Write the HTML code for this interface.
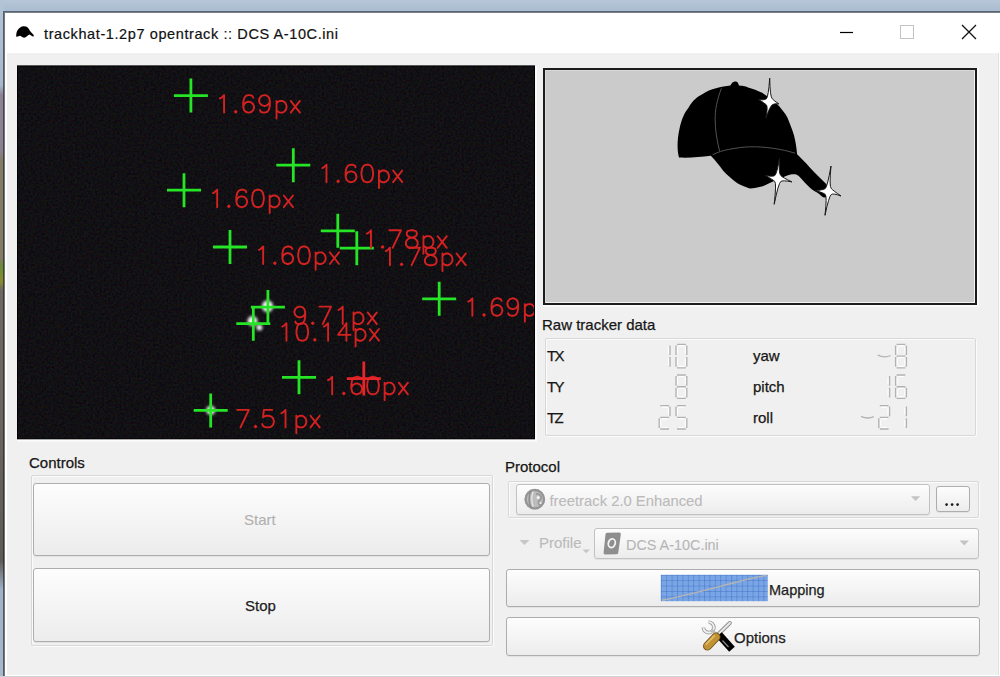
<!DOCTYPE html>
<html><head><meta charset="utf-8"><style>
*{margin:0;padding:0;box-sizing:border-box}
html,body{width:1000px;height:677px;overflow:hidden;background:#ffffff;font-family:"Liberation Sans",sans-serif;color:#000}
.a{position:absolute}
#bgtop{left:0;top:0;width:1000px;height:12px;background:linear-gradient(#b7c6d8,#a9bbcf)}
#bgleft{left:0;top:0;width:4px;height:677px;background:linear-gradient(#b4c4d7 0,#a8b8cc 85px,#8c8494 95px,#8a8290 150px,#857a66 160px,#857a66 258px,#6a8a3a 266px,#8a8a30 282px,#6d6862 290px,#6a6560 420px,#5e5a56 560px,#9fb2c6 590px,#a6b8cb 677px)}
#win{left:3px;top:11px;width:997px;height:666px;border-left:2px solid rgba(25,28,34,0.6);border-top:2px solid rgba(40,50,62,0.62);background:#fff;background-clip:padding-box}
#body{left:7px;top:53px;width:991px;height:622px;background:#f0f0f0}
#rline{left:998px;top:53px;width:1px;height:622px;background:#e2e2e2}
#bline{left:0;top:676px;width:1000px;height:1px;background:#cfd3d8}
#title{left:5px;top:13px;width:995px;height:40px;background:#fff}
.lbl{font-size:15px;white-space:nowrap;line-height:1;color:#161616;-webkit-text-stroke:0.25px currentColor}
#prev{left:543px;top:68px;width:434px;height:237px;background:#cbcbcb;border:2px solid #1c1c1c;box-shadow:inset 1px 1px 0 #d8d8d8,inset -1px -1px 0 #f2f2f2}
.gb{border:1px solid #d8d8d8;border-radius:2px;box-shadow:inset 1px 1px 0 #fbfbfb,1px 1px 0 #fbfbfb}
.btn{border:1px solid #adadad;border-radius:3px;background:linear-gradient(#fdfdfd,#ececec);box-shadow:0 1px 0 #e2e2e2}
</style></head><body>
<div class="a" id="bgtop"></div><div class="a" id="bgleft"></div><div class="a" id="win"></div><div class="a" id="title"></div><div class="a" id="body"></div><div class="a" id="rline"></div><div class="a" id="bline"></div>
<svg class="a" style="left:0;top:0" width="1000" height="60" viewBox="0 0 1000 60"><path d="M16.3,36.8 C15.8,32 18.3,27.3 23,26.3 C26.5,25.8 29,28 30,31 L33.9,35.3 L33.2,36.7 L29.5,34.6 C27.5,35 26.5,37.6 24,37.7 C22,37.6 21,35.6 19.5,35.9 C18,36.1 17,37 16.3,36.8Z" fill="#000"/><path d="M840,32.5H853" stroke="#000" stroke-width="1.2"/><rect x="900.5" y="25.5" width="13" height="13" fill="none" stroke="#c4c4c4" stroke-width="1"/><path d="M962,25L976,39M976,25L962,39" stroke="#111" stroke-width="1.3"/></svg>
<div class="a lbl" style="left:44px;top:27px;font-size:14.5px;letter-spacing:0.6px;color:#111;-webkit-text-stroke:0.2px #111">trackhat-1.2p7 opentrack :: DCS A-10C.ini</div>
<svg class="a" style="left:0;top:0" width="1000" height="677" viewBox="0 0 1000 677"><defs><clipPath id="cc"><rect x="17" y="65.5" width="518" height="374"/></clipPath><filter id="bl" x="-1" y="-1" width="3" height="3"><feGaussianBlur stdDeviation="1.6"/></filter><filter id="nz" x="0" y="0" width="1" height="1"><feTurbulence type="fractalNoise" baseFrequency="0.45" numOctaves="2" seed="7"/><feColorMatrix type="matrix" values="1.6 0 0 0 -0.62  0 1.6 0 0 -0.64  0 0 1.6 0 -0.62  0 0 0 0 0.07"/></filter></defs><g clip-path="url(#cc)"><rect x="17" y="65.5" width="518" height="374" fill="#0b0a0d"/><rect x="17" y="65.5" width="518" height="374" filter="url(#nz)"/><g fill="#f4f4f4" filter="url(#bl)"><ellipse cx="267.5" cy="306.3" rx="5.5" ry="6"/><ellipse cx="252.5" cy="321" rx="5" ry="5"/><circle cx="259.4" cy="327.4" r="3"/><circle cx="210.7" cy="410.2" r="4.5"/></g><path d="M173.9,95.6H207.9M190.9,78.6V112.6" stroke="#26e426" stroke-width="2.8" fill="none"/><path d="M276.3,165.2H310.3M293.3,148.2V182.2" stroke="#26e426" stroke-width="2.8" fill="none"/><path d="M167.0,190.2H201.0M184.0,173.2V207.2" stroke="#26e426" stroke-width="2.8" fill="none"/><path d="M213.0,247.0H247.0M230.0,230.0V264.0" stroke="#26e426" stroke-width="2.8" fill="none"/><path d="M320.8,230.8H354.8M337.8,213.8V247.8" stroke="#26e426" stroke-width="2.8" fill="none"/><path d="M339.8,248.2H373.8M356.8,231.2V265.2" stroke="#26e426" stroke-width="2.8" fill="none"/><path d="M250.89999999999998,307.1H284.9M267.9,290.1V324.1" stroke="#26e426" stroke-width="2.8" fill="none"/><path d="M236.3,323.7H270.3M253.3,306.7V340.7" stroke="#26e426" stroke-width="2.8" fill="none"/><path d="M422.2,298.8H456.2M439.2,281.8V315.8" stroke="#26e426" stroke-width="2.8" fill="none"/><path d="M282.0,377.3H316.0M299.0,360.3V394.3" stroke="#26e426" stroke-width="2.8" fill="none"/><path d="M193.7,410.4H227.7M210.7,393.4V427.4" stroke="#26e426" stroke-width="2.8" fill="none"/><g fill="none" stroke="#d42222" stroke-width="2.28" stroke-linecap="round" stroke-linejoin="round"><path transform="translate(223.23,105.10) scale(0.833)" d="M-4,-8L-2,-9L1,-12L1,9"/><path transform="translate(235.72,105.10) scale(0.833)" d="M0,7L-1,8L0,9L1,8Z"/><path transform="translate(248.22,105.10) scale(0.833)" d="M6,-9L5,-11L2,-12L0,-12L-3,-11L-5,-8L-6,-3L-6,2L-5,6L-3,8L0,9L1,9L4,8L6,6L7,3L7,2L6,-1L4,-3L1,-4L0,-4L-3,-3L-5,-1L-6,2"/><path transform="translate(264.88,105.10) scale(0.833)" d="M6,-5L5,-2L3,0L0,1L-1,1L-4,0L-6,-2L-7,-5L-7,-6L-6,-9L-4,-11L-1,-12L0,-12L3,-11L5,-9L6,-5L6,0L5,5L3,8L0,9L-2,9L-5,8L-6,6"/><path transform="translate(281.54,105.10) scale(0.833)" d="M-6,-5L-6,16M-6,-2L-4,-4L-2,-5L1,-5L3,-4L5,-2L6,1L6,3L5,6L3,8L1,9L-2,9L-4,8L-6,6"/><path transform="translate(295.70,105.10) scale(0.833)" d="M-6,-5L5,9M5,-5L-6,9"/></g><g fill="none" stroke="#d42222" stroke-width="2.28" stroke-linecap="round" stroke-linejoin="round"><path transform="translate(325.63,174.70) scale(0.833)" d="M-4,-8L-2,-9L1,-12L1,9"/><path transform="translate(338.12,174.70) scale(0.833)" d="M0,7L-1,8L0,9L1,8Z"/><path transform="translate(350.62,174.70) scale(0.833)" d="M6,-9L5,-11L2,-12L0,-12L-3,-11L-5,-8L-6,-3L-6,2L-5,6L-3,8L0,9L1,9L4,8L6,6L7,3L7,2L6,-1L4,-3L1,-4L0,-4L-3,-3L-5,-1L-6,2"/><path transform="translate(367.28,174.70) scale(0.833)" d="M-1,-12L-4,-11L-6,-8L-7,-3L-7,0L-6,5L-4,8L-1,9L1,9L4,8L6,5L7,0L7,-3L6,-8L4,-11L1,-12Z"/><path transform="translate(383.94,174.70) scale(0.833)" d="M-6,-5L-6,16M-6,-2L-4,-4L-2,-5L1,-5L3,-4L5,-2L6,1L6,3L5,6L3,8L1,9L-2,9L-4,8L-6,6"/><path transform="translate(398.10,174.70) scale(0.833)" d="M-6,-5L5,9M5,-5L-6,9"/></g><g fill="none" stroke="#d42222" stroke-width="2.28" stroke-linecap="round" stroke-linejoin="round"><path transform="translate(216.33,199.70) scale(0.833)" d="M-4,-8L-2,-9L1,-12L1,9"/><path transform="translate(228.82,199.70) scale(0.833)" d="M0,7L-1,8L0,9L1,8Z"/><path transform="translate(241.32,199.70) scale(0.833)" d="M6,-9L5,-11L2,-12L0,-12L-3,-11L-5,-8L-6,-3L-6,2L-5,6L-3,8L0,9L1,9L4,8L6,6L7,3L7,2L6,-1L4,-3L1,-4L0,-4L-3,-3L-5,-1L-6,2"/><path transform="translate(257.98,199.70) scale(0.833)" d="M-1,-12L-4,-11L-6,-8L-7,-3L-7,0L-6,5L-4,8L-1,9L1,9L4,8L6,5L7,0L7,-3L6,-8L4,-11L1,-12Z"/><path transform="translate(274.64,199.70) scale(0.833)" d="M-6,-5L-6,16M-6,-2L-4,-4L-2,-5L1,-5L3,-4L5,-2L6,1L6,3L5,6L3,8L1,9L-2,9L-4,8L-6,6"/><path transform="translate(288.80,199.70) scale(0.833)" d="M-6,-5L5,9M5,-5L-6,9"/></g><g fill="none" stroke="#d42222" stroke-width="2.28" stroke-linecap="round" stroke-linejoin="round"><path transform="translate(262.33,256.50) scale(0.833)" d="M-4,-8L-2,-9L1,-12L1,9"/><path transform="translate(274.82,256.50) scale(0.833)" d="M0,7L-1,8L0,9L1,8Z"/><path transform="translate(287.32,256.50) scale(0.833)" d="M6,-9L5,-11L2,-12L0,-12L-3,-11L-5,-8L-6,-3L-6,2L-5,6L-3,8L0,9L1,9L4,8L6,6L7,3L7,2L6,-1L4,-3L1,-4L0,-4L-3,-3L-5,-1L-6,2"/><path transform="translate(303.98,256.50) scale(0.833)" d="M-1,-12L-4,-11L-6,-8L-7,-3L-7,0L-6,5L-4,8L-1,9L1,9L4,8L6,5L7,0L7,-3L6,-8L4,-11L1,-12Z"/><path transform="translate(320.64,256.50) scale(0.833)" d="M-6,-5L-6,16M-6,-2L-4,-4L-2,-5L1,-5L3,-4L5,-2L6,1L6,3L5,6L3,8L1,9L-2,9L-4,8L-6,6"/><path transform="translate(334.80,256.50) scale(0.833)" d="M-6,-5L5,9M5,-5L-6,9"/></g><g fill="none" stroke="#d42222" stroke-width="2.28" stroke-linecap="round" stroke-linejoin="round"><path transform="translate(370.13,240.30) scale(0.833)" d="M-4,-8L-2,-9L1,-12L1,9"/><path transform="translate(382.62,240.30) scale(0.833)" d="M0,7L-1,8L0,9L1,8Z"/><path transform="translate(395.12,240.30) scale(0.833)" d="M7,-12L-3,9M-7,-12L7,-12"/><path transform="translate(411.78,240.30) scale(0.833)" d="M-2,-12L-5,-11L-6,-9L-6,-7L-5,-5L-3,-4L1,-3L4,-2L6,0L7,2L7,5L6,7L5,8L2,9L-2,9L-5,8L-6,7L-7,5L-7,2L-6,0L-4,-2L-1,-3L3,-4L5,-5L6,-7L6,-9L5,-11L2,-12Z"/><path transform="translate(428.44,240.30) scale(0.833)" d="M-6,-5L-6,16M-6,-2L-4,-4L-2,-5L1,-5L3,-4L5,-2L6,1L6,3L5,6L3,8L1,9L-2,9L-4,8L-6,6"/><path transform="translate(442.60,240.30) scale(0.833)" d="M-6,-5L5,9M5,-5L-6,9"/></g><g fill="none" stroke="#d42222" stroke-width="2.28" stroke-linecap="round" stroke-linejoin="round"><path transform="translate(389.13,257.70) scale(0.833)" d="M-4,-8L-2,-9L1,-12L1,9"/><path transform="translate(401.62,257.70) scale(0.833)" d="M0,7L-1,8L0,9L1,8Z"/><path transform="translate(414.12,257.70) scale(0.833)" d="M7,-12L-3,9M-7,-12L7,-12"/><path transform="translate(430.78,257.70) scale(0.833)" d="M-2,-12L-5,-11L-6,-9L-6,-7L-5,-5L-3,-4L1,-3L4,-2L6,0L7,2L7,5L6,7L5,8L2,9L-2,9L-5,8L-6,7L-7,5L-7,2L-6,0L-4,-2L-1,-3L3,-4L5,-5L6,-7L6,-9L5,-11L2,-12Z"/><path transform="translate(447.44,257.70) scale(0.833)" d="M-6,-5L-6,16M-6,-2L-4,-4L-2,-5L1,-5L3,-4L5,-2L6,1L6,3L5,6L3,8L1,9L-2,9L-4,8L-6,6"/><path transform="translate(461.60,257.70) scale(0.833)" d="M-6,-5L5,9M5,-5L-6,9"/></g><g fill="none" stroke="#d42222" stroke-width="2.28" stroke-linecap="round" stroke-linejoin="round"><path transform="translate(300.23,316.60) scale(0.833)" d="M6,-5L5,-2L3,0L0,1L-1,1L-4,0L-6,-2L-7,-5L-7,-6L-6,-9L-4,-11L-1,-12L0,-12L3,-11L5,-9L6,-5L6,0L5,5L3,8L0,9L-2,9L-5,8L-6,6"/><path transform="translate(312.72,316.60) scale(0.833)" d="M0,7L-1,8L0,9L1,8Z"/><path transform="translate(325.22,316.60) scale(0.833)" d="M7,-12L-3,9M-7,-12L7,-12"/><path transform="translate(341.88,316.60) scale(0.833)" d="M-4,-8L-2,-9L1,-12L1,9"/><path transform="translate(358.54,316.60) scale(0.833)" d="M-6,-5L-6,16M-6,-2L-4,-4L-2,-5L1,-5L3,-4L5,-2L6,1L6,3L5,6L3,8L1,9L-2,9L-4,8L-6,6"/><path transform="translate(372.70,316.60) scale(0.833)" d="M-6,-5L5,9M5,-5L-6,9"/></g><g fill="none" stroke="#d42222" stroke-width="2.28" stroke-linecap="round" stroke-linejoin="round"><path transform="translate(285.63,333.20) scale(0.833)" d="M-4,-8L-2,-9L1,-12L1,9"/><path transform="translate(302.29,333.20) scale(0.833)" d="M-1,-12L-4,-11L-6,-8L-7,-3L-7,0L-6,5L-4,8L-1,9L1,9L4,8L6,5L7,0L7,-3L6,-8L4,-11L1,-12Z"/><path transform="translate(314.79,333.20) scale(0.833)" d="M0,7L-1,8L0,9L1,8Z"/><path transform="translate(327.28,333.20) scale(0.833)" d="M-4,-8L-2,-9L1,-12L1,9"/><path transform="translate(343.94,333.20) scale(0.833)" d="M3,-12L-7,2L8,2M3,-12L3,9"/><path transform="translate(360.60,333.20) scale(0.833)" d="M-6,-5L-6,16M-6,-2L-4,-4L-2,-5L1,-5L3,-4L5,-2L6,1L6,3L5,6L3,8L1,9L-2,9L-4,8L-6,6"/><path transform="translate(374.76,333.20) scale(0.833)" d="M-6,-5L5,9M5,-5L-6,9"/></g><g fill="none" stroke="#d42222" stroke-width="2.28" stroke-linecap="round" stroke-linejoin="round"><path transform="translate(471.53,308.30) scale(0.833)" d="M-4,-8L-2,-9L1,-12L1,9"/><path transform="translate(484.02,308.30) scale(0.833)" d="M0,7L-1,8L0,9L1,8Z"/><path transform="translate(496.52,308.30) scale(0.833)" d="M6,-9L5,-11L2,-12L0,-12L-3,-11L-5,-8L-6,-3L-6,2L-5,6L-3,8L0,9L1,9L4,8L6,6L7,3L7,2L6,-1L4,-3L1,-4L0,-4L-3,-3L-5,-1L-6,2"/><path transform="translate(513.18,308.30) scale(0.833)" d="M6,-5L5,-2L3,0L0,1L-1,1L-4,0L-6,-2L-7,-5L-7,-6L-6,-9L-4,-11L-1,-12L0,-12L3,-11L5,-9L6,-5L6,0L5,5L3,8L0,9L-2,9L-5,8L-6,6"/><path transform="translate(529.84,308.30) scale(0.833)" d="M-6,-5L-6,16M-6,-2L-4,-4L-2,-5L1,-5L3,-4L5,-2L6,1L6,3L5,6L3,8L1,9L-2,9L-4,8L-6,6"/><path transform="translate(544.00,308.30) scale(0.833)" d="M-6,-5L5,9M5,-5L-6,9"/></g><g fill="none" stroke="#d42222" stroke-width="2.28" stroke-linecap="round" stroke-linejoin="round"><path transform="translate(331.33,386.80) scale(0.833)" d="M-4,-8L-2,-9L1,-12L1,9"/><path transform="translate(343.82,386.80) scale(0.833)" d="M0,7L-1,8L0,9L1,8Z"/><path transform="translate(356.32,386.80) scale(0.833)" d="M6,-9L5,-11L2,-12L0,-12L-3,-11L-5,-8L-6,-3L-6,2L-5,6L-3,8L0,9L1,9L4,8L6,6L7,3L7,2L6,-1L4,-3L1,-4L0,-4L-3,-3L-5,-1L-6,2"/><path transform="translate(372.98,386.80) scale(0.833)" d="M-1,-12L-4,-11L-6,-8L-7,-3L-7,0L-6,5L-4,8L-1,9L1,9L4,8L6,5L7,0L7,-3L6,-8L4,-11L1,-12Z"/><path transform="translate(389.64,386.80) scale(0.833)" d="M-6,-5L-6,16M-6,-2L-4,-4L-2,-5L1,-5L3,-4L5,-2L6,1L6,3L5,6L3,8L1,9L-2,9L-4,8L-6,6"/><path transform="translate(403.80,386.80) scale(0.833)" d="M-6,-5L5,9M5,-5L-6,9"/></g><g fill="none" stroke="#d42222" stroke-width="2.28" stroke-linecap="round" stroke-linejoin="round"><path transform="translate(243.03,419.90) scale(0.833)" d="M7,-12L-3,9M-7,-12L7,-12"/><path transform="translate(255.52,419.90) scale(0.833)" d="M0,7L-1,8L0,9L1,8Z"/><path transform="translate(268.02,419.90) scale(0.833)" d="M5,-12L-5,-12L-6,-3L-5,-4L-2,-5L1,-5L4,-4L6,-2L7,1L7,3L6,6L4,8L1,9L-2,9L-5,8L-6,7L-7,5"/><path transform="translate(284.68,419.90) scale(0.833)" d="M-4,-8L-2,-9L1,-12L1,9"/><path transform="translate(301.34,419.90) scale(0.833)" d="M-6,-5L-6,16M-6,-2L-4,-4L-2,-5L1,-5L3,-4L5,-2L6,1L6,3L5,6L3,8L1,9L-2,9L-4,8L-6,6"/><path transform="translate(315.50,419.90) scale(0.833)" d="M-6,-5L5,9M5,-5L-6,9"/></g><path d="M346.8,378.6H380.8M363.8,361.6V395.6" stroke="#e4262a" stroke-width="2.8" fill="none"/></g><rect x="17.5" y="66" width="517" height="373" fill="none" stroke="#000" stroke-width="1"/><path d="M536,66V440.5H17" fill="none" stroke="#fbfbfb" stroke-width="2"/></svg>
<div class="a" id="prev"></div>
<div class="a" style="left:977px;top:68px;width:1.5px;height:238.5px;background:#fafafa"></div><div class="a" style="left:543px;top:305px;width:435px;height:1.5px;background:#fafafa"></div>
<svg class="a" style="left:0;top:0" width="1000" height="677" viewBox="0 0 1000 677"><path d="M679,157.5 C677,150 677,140 679.6,128.2 C682,118 685,112 688.5,107.8 C693,100 697,97 701.9,94.5 C707,91 711,89.5 716,88.3 C721,87 726,86 730.3,85.6 L732,83 C734,81 737,81 738,83 L739,85.6 C744,86 746,86.5 748,87.4 C754,89 758,91 762.2,92.7 C767,96 771,99 775.7,102.8 C781,108 785,113 787.5,117.8 C790,124 792,129 793.9,135 C795.5,141 796.5,147 797.1,154.2 C802,159 806,163 809.6,167.2 C815,173 820,178 826,183.7 C829,187 830,191 828,195 C826,198 824,198 822,196.5 C818,193 815,191.5 812,189.6 C808,186 805,183 802.5,180.1 C800,177 798,175 795.4,174.2 C792,174 790,174.5 787.2,175.4 C784,177 781,178 777.8,179 C772,182 767,184.5 762.8,186.3 C758,187.5 754,188.5 749.8,188.5 C745,187 741,185 737.4,183.2 C732,179 727,175 723.2,170.7 C719,165 715,160 710.8,155.7 C700,157 690,158 679,157.5Z" fill="#000"/><path d="M721.4,88.3 C717,100 715,110 715.2,119.3 C715,130 717,140 719.6,151.2" fill="none" stroke="#5a5a5a" stroke-width="0.9"/><path d="M712.6,154.8 C718,152 723,150.5 728.5,149.5 C736,148 743,147 749.8,146.8 C765,146.5 782,149 795,153.2" fill="none" stroke="#5a5a5a" stroke-width="0.9"/></svg>
<svg class="a" style="left:0;top:0" width="1000" height="677" viewBox="0 0 1000 677"><path d="M769.7,78.2 Q770.05,97.0 772.3,98.8 Q774.0999999999999,100.89999999999999 778.9,103.9 Q774.0999999999999,103.3 772.3,104.8 Q769.9,106.6 766,117.8 Q768.0999999999999,106.6 766.3,104.8 Q764.5,103.0 758.6,99.6 Q764.5,100.3 766.3,98.8 Q768.4,97.0 769.7,78.2Z" fill="#fff" stroke="#1a1a1a" stroke-width="1"/><path d="M779.5,158.3 Q778.55,173.7 780.8,175.5 Q782.5999999999999,177.6 791.9,181.9 Q782.5999999999999,180.0 780.8,181.5 Q778.4,183.3 774.2,204.3 Q776.5999999999999,183.3 774.8,181.5 Q773.0,179.7 765.5,175.4 Q773.0,177.0 774.8,175.5 Q776.9,173.7 779.5,158.3Z" fill="#fff" stroke="#1a1a1a" stroke-width="1"/><path d="M831,166 Q829.05,186.7 831.3,188.5 Q833.0999999999999,190.6 841,196 Q833.0999999999999,193.0 831.3,194.5 Q828.9,196.3 825,215.3 Q827.0999999999999,196.3 825.3,194.5 Q823.5,192.7 815.3,190.6 Q823.5,190.0 825.3,188.5 Q827.4,186.7 831,166Z" fill="#fff" stroke="#1a1a1a" stroke-width="1"/></svg>
<div class="a lbl" style="left:542px;top:316.8px">Raw tracker data</div>
<div class="a gb" style="left:545px;top:338px;width:431px;height:98px"></div>
<div class="a lbl" style="left:547px;top:347.8px;letter-spacing:-1.6px">TX</div>
<div class="a lbl" style="left:547px;top:378.8px;letter-spacing:-1.6px">TY</div>
<div class="a lbl" style="left:547px;top:409.8px;letter-spacing:-1.6px">TZ</div>
<div class="a lbl" style="left:753px;top:348px">yaw</div>
<div class="a lbl" style="left:753px;top:379px">pitch</div>
<div class="a lbl" style="left:753px;top:410px">roll</div>
<svg class="a" style="left:0;top:0" width="1000" height="677" viewBox="0 0 1000 677"><path d="M668.5,346.9V353.6M668.5,358.6V365.3M678.5,345.9H684.3M678.5,366.3H684.3M677.5,346.9V353.6M677.5,358.6V365.3M685.3,346.9V353.6M685.3,358.6V365.3" fill="none" stroke="#ffffff" stroke-width="1.2"/><path d="M670.0,345.4V355.1M670.0,357.1V366.8M677.0,344.4H685.8M677.0,367.8H685.8M676.0,345.4V355.1M676.0,357.1V366.8M686.8,345.4V355.1M686.8,357.1V366.8" fill="none" stroke="#b2b2b2" stroke-width="1.35"/><path d="M678.5,376.5H684.3M678.5,396.9H684.3M678.5,388.2H684.3M677.5,377.5V384.2M677.5,389.2V395.9M685.3,377.5V384.2M685.3,389.2V395.9" fill="none" stroke="#ffffff" stroke-width="1.2"/><path d="M677.0,375.0H685.8M677.0,398.4H685.8M677.0,386.7H685.8M676.0,376.0V385.7M676.0,387.7V397.4M686.8,376.0V385.7M686.8,387.7V397.4" fill="none" stroke="#b2b2b2" stroke-width="1.35"/><path d="M661.7,407.1H667.5M661.7,427.5H667.5M661.7,418.8H667.5M660.7,419.8V426.5M668.5,408.1V414.8M678.5,407.1H684.3M678.5,427.5H684.3M678.5,418.8H684.3M677.5,408.1V414.8M685.3,419.8V426.5" fill="none" stroke="#ffffff" stroke-width="1.2"/><path d="M660.2,405.6H669.0M660.2,429.0H669.0M660.2,417.3H669.0M659.2,418.3V428.0M670.0,406.6V416.3M677.0,405.6H685.8M677.0,429.0H685.8M677.0,417.3H685.8M676.0,406.6V416.3M686.8,418.3V428.0" fill="none" stroke="#b2b2b2" stroke-width="1.35"/><path d="M898.1,345.9H903.9M898.1,366.3H903.9M898.1,357.6H903.9M897.1,346.9V353.6M897.1,358.6V365.3M904.9,346.9V353.6M904.9,358.6V365.3" fill="none" stroke="#ffffff" stroke-width="1.2"/><path d="M877.8,355.1 Q884.2,358.3 890.6,355.5M896.6,344.4H905.4M896.6,367.8H905.4M896.6,356.1H905.4M895.6,345.4V355.1M895.6,357.1V366.8M906.4,345.4V355.1M906.4,357.1V366.8" fill="none" stroke="#b2b2b2" stroke-width="1.35"/><path d="M888.1,377.5V384.2M888.1,389.2V395.9M898.1,376.5H903.9M898.1,396.9H903.9M898.1,388.2H903.9M897.1,377.5V384.2M897.1,389.2V395.9M904.9,389.2V395.9" fill="none" stroke="#ffffff" stroke-width="1.2"/><path d="M889.6,376.0V385.7M889.6,387.7V397.4M896.6,375.0H905.4M896.6,398.4H905.4M896.6,386.7H905.4M895.6,376.0V385.7M895.6,387.7V397.4M906.4,387.7V397.4" fill="none" stroke="#b2b2b2" stroke-width="1.35"/><path d="M881.3,407.1H887.1M881.3,427.5H887.1M881.3,418.8H887.1M880.3,419.8V426.5M888.1,408.1V414.8M904.9,408.1V414.8M904.9,419.8V426.5" fill="none" stroke="#ffffff" stroke-width="1.2"/><path d="M861.0,416.3 Q867.4,419.5 873.8,416.7M879.8,405.6H888.6M879.8,429.0H888.6M879.8,417.3H888.6M878.8,418.3V428.0M889.6,406.6V416.3M906.4,406.6V416.3M906.4,418.3V428.0" fill="none" stroke="#b2b2b2" stroke-width="1.35"/></svg>
<div class="a lbl" style="left:29px;top:454.6px">Controls</div>
<div class="a gb" style="left:31px;top:475px;width:462px;height:171px"></div>
<div class="a btn" style="left:33px;top:483px;width:457px;height:73px"></div>
<div class="a lbl" style="left:244px;top:512.4px;color:#b0b0b0;-webkit-text-stroke:0.1px #b0b0b0">Start</div>
<div class="a btn" style="left:33px;top:568px;width:457px;height:74px"></div>
<div class="a lbl" style="left:245px;top:598px;color:#1e1e1e">Stop</div>
<div class="a lbl" style="left:505px;top:459.3px">Protocol</div>
<div class="a gb" style="left:508px;top:481px;width:471px;height:37px"></div>
<div class="a btn" style="left:516px;top:484px;width:414px;height:31px;border-color:#c2c2c2"></div>
<div class="a lbl" style="left:549.5px;top:494px;color:#bababa;font-size:14.8px;-webkit-text-stroke:0.1px #bababa">freetrack 2.0 Enhanced</div>
<div class="a btn" style="left:936px;top:486px;width:34px;height:26px"></div>
<div class="a lbl" style="left:539px;top:535.2px;color:#bababa;-webkit-text-stroke:0.1px #bababa">Profile</div>
<div class="a btn" style="left:594px;top:528px;width:385px;height:31px;border-color:#c2c2c2"></div>
<div class="a lbl" style="left:626px;top:537.6px;color:#b6b6b6;font-size:14.4px;-webkit-text-stroke:0.1px #b6b6b6">DCS A-10C.ini</div>
<div class="a btn" style="left:506px;top:569px;width:474px;height:38px"></div>
<div class="a lbl" style="left:769px;top:582.7px;color:#1e1e1e;font-size:14.5px">Mapping</div>
<div class="a btn" style="left:506px;top:617px;width:474px;height:39px"></div>
<div class="a lbl" style="left:734px;top:630px;color:#1e1e1e">Options</div>
<svg class="a" style="left:0;top:0" width="1000" height="677" viewBox="0 0 1000 677"><circle cx="534.8" cy="499.2" r="10.3" fill="#bcbcbc"/><circle cx="534.8" cy="499.2" r="9.2" fill="none" stroke="#959595" stroke-width="2.3"/><path d="M531,491 C528.5,495 528.5,503 531,507.5" fill="none" stroke="#8c8c8c" stroke-width="1.5"/><path d="M533.3,491.5 C531.3,495.5 531.3,502.5 533.3,506.5" fill="none" stroke="#ececec" stroke-width="1.1"/><path d="M536,494 C541,493.5 542.5,497.5 539.5,500.5 C537.5,502.5 538.5,505.5 542,505" fill="none" stroke="#9a9a9a" stroke-width="1.8"/><circle cx="538.2" cy="497.6" r="1.6" fill="#f4f4f4"/><circle cx="540.5" cy="503" r="1.1" fill="#f0f0f0"/><path d="M911,496.3H920.2L915.6,501Z" fill="#c4c4c4"/><path d="M959.5,540.5H969L964.3,545.5Z" fill="#c4c4c4"/><path d="M519.5,540H529.5L524.5,545Z" fill="#c6c6c6"/><path d="M582.5,549.5H590L586.2,553.2Z" fill="#c6c6c6"/><g fill="#1a1a1a"><circle cx="946.6" cy="504.6" r="1.35"/><circle cx="952.1" cy="504.6" r="1.35"/><circle cx="957.6" cy="504.6" r="1.35"/></g><path d="M607,532.8 L619.5,532.6 Q621,532.8 620.8,534.5 L618.2,553 Q618,554.3 616.5,554.3 L605,554.5 Q603.4,554.4 603.6,552.8 L605.5,534.3 Q605.7,532.9 607,532.8Z" fill="#8e8e8e"/><ellipse cx="611.8" cy="543.2" rx="3.4" ry="4.4" transform="rotate(18 611.8 543.2)" fill="none" stroke="#f4f4f4" stroke-width="1.8"/><defs><pattern id="grid" x="660.8" y="574.8" width="5.4" height="5.4" patternUnits="userSpaceOnUse"><rect width="5.4" height="5.4" fill="#7da8e7"/><path d="M0,0.5H5.4M0.5,0V5.4" stroke="#5886d2" stroke-width="1"/><path d="M0,3.2H5.4M3.2,0V5.4" stroke="#72a0e2" stroke-width="0.5"/></pattern></defs><rect x="660.8" y="574.8" width="107" height="26.4" fill="url(#grid)"/><path d="M662,600.3 C685,596 710,589 735,582.5 C750,578.5 758,576.5 766.5,575.5" fill="none" stroke="#b4b4b4" stroke-width="1.4"/><path d="M708.6,622.2 A5.2,5.2 0 1 1 703.4,627.4" fill="none" stroke="#8a8a8a" stroke-width="3.6"/><path d="M708.6,622.2 A5.2,5.2 0 1 1 703.4,627.4" fill="none" stroke="#eeeeee" stroke-width="2.2"/><path d="M716.5,636 L729.8,623" stroke="#8c8c8c" stroke-width="4" stroke-linecap="round"/><path d="M716.5,636 L729.8,623" stroke="#e8e8e8" stroke-width="2.2" stroke-linecap="round"/><path d="M711,630 L720,637" stroke="#bdbdbd" stroke-width="3"/><path d="M721.5,637.5 L729.5,646.5" stroke="#000" stroke-width="7.5" stroke-linecap="square"/><path d="M722.5,640.5 L728.5,647" stroke="#8a8a8a" stroke-width="1.2"/><path d="M716,637 L707.5,646" stroke="#6e5218" stroke-width="9" stroke-linecap="round"/><path d="M716,637 L707.5,646" stroke="#c09233" stroke-width="7.2" stroke-linecap="round"/><path d="M714.2,635.8 L706.2,644.2" stroke="#e2bd6a" stroke-width="1.8" stroke-linecap="round"/></svg>
</body></html>
